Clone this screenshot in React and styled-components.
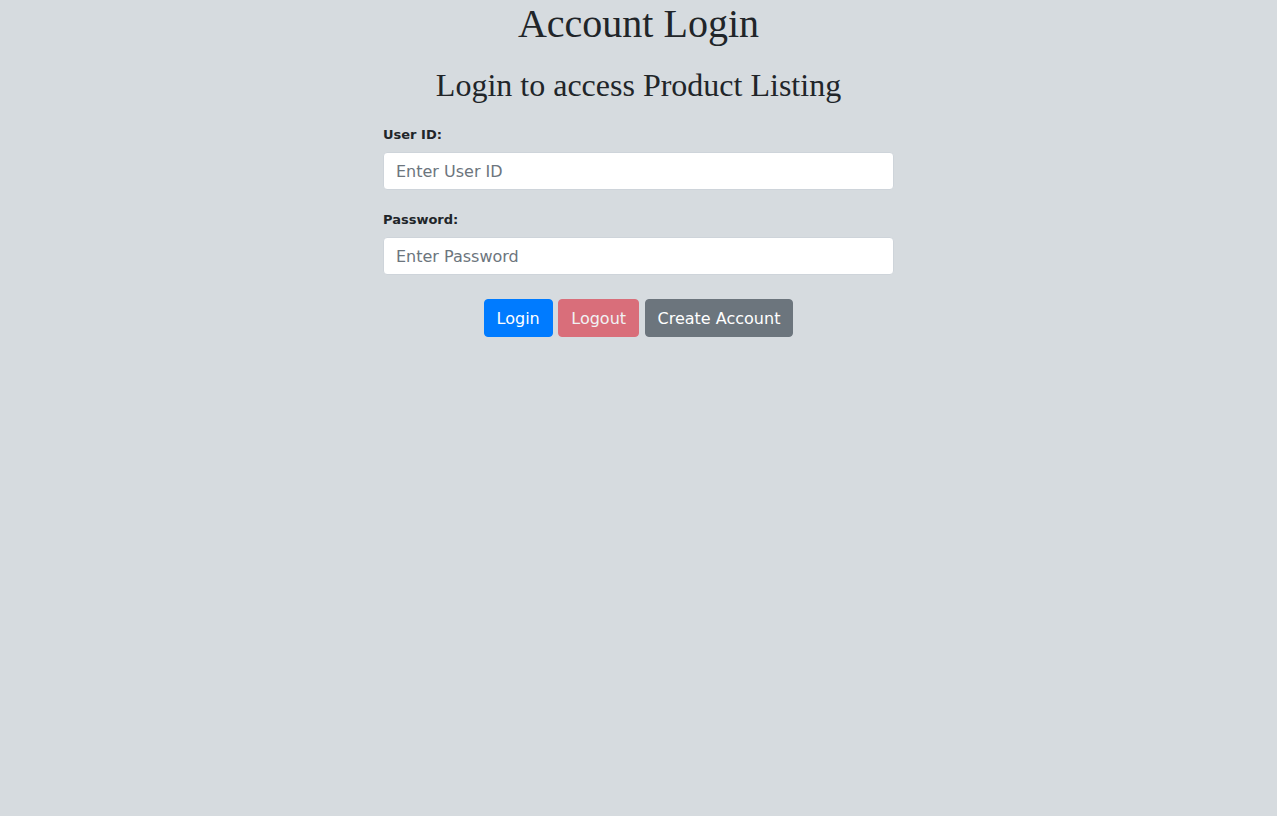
import React from "react";
import styled, { createGlobalStyle } from "styled-components";

const Global = createGlobalStyle`
  html, body { margin: 0; padding: 0; }
  body {
    background: #d6dbdf;
    color: #212529;
    font-family: "Liberation Serif", "Times New Roman", serif;
    min-height: 816px;
  }
  * { box-sizing: border-box; }
`;

const Page = styled.div`
  display: flex;
  flex-direction: column;
  align-items: center;
`;

const Title = styled.h1`
  margin: 0 0 18px;
  font-family: "Liberation Serif", serif;
  font-weight: 400;
  font-size: 40px;
  line-height: 1.2;
  text-align: center;
`;

const Subtitle = styled.h2`
  margin: 0 0 21px;
  font-family: "Liberation Serif", serif;
  font-weight: 400;
  font-size: 32px;
  line-height: 1.2;
  text-align: center;
`;

const Form = styled.form`
  width: 511px;
  display: flex;
  flex-direction: column;
`;

const Group = styled.div`
  display: flex;
  flex-direction: column;
  margin-bottom: ${(p) => p.$mb || "20.5px"};
`;

const Label = styled.label`
  font-family: "DejaVu Sans", Verdana, sans-serif;
  font-weight: 700;
  font-size: 13px;
  line-height: 1.5;
  margin-bottom: 7px;
`;

const Input = styled.input`
  height: 38px;
  width: 100%;
  padding: 7px 12px 5px;
  font-family: "DejaVu Sans", Verdana, sans-serif;
  font-size: 16px;
  line-height: 1.5;
  color: #495057;
  background: #fff;
  border: 1px solid #ced4da;
  border-radius: 4px;
  outline: none;
  &::placeholder { color: #6c757d; opacity: 1; }
`;

const Actions = styled.div`
  display: flex;
  justify-content: center;
  gap: 5.5px;
  margin-top: 4px;
`;

const colors = {
  primary: "#007bff",
  danger: "#dc3545",
  secondary: "#6c757d",
};

const Button = styled.button`
  display: inline-block;
  height: 38px;
  padding: 7px 12px 5px;
  font-family: "DejaVu Sans", Verdana, sans-serif;
  font-size: 16px;
  line-height: 1.5;
  color: #fff;
  background: ${(p) => colors[p.$variant]};
  border: 1px solid ${(p) => colors[p.$variant]};
  border-radius: 4px;
  cursor: pointer;
  &:disabled { opacity: 0.65; cursor: default; }
`;

export default function App() {
  return (
    <>
      <Global />
      <Page>
        <Title>Account Login</Title>
        <Subtitle>Login to access Product Listing</Subtitle>
        <Form onSubmit={(e) => e.preventDefault()}>
          <Group>
            <Label htmlFor="uid">User ID:</Label>
            <Input id="uid" type="text" placeholder="Enter User ID" />
          </Group>
          <Group $mb="20px">
            <Label htmlFor="pwd">Password:</Label>
            <Input id="pwd" type="password" placeholder="Enter Password" />
          </Group>
          <Actions>
            <Button $variant="primary" type="submit">Login</Button>
            <Button $variant="danger" type="button" disabled>Logout</Button>
            <Button $variant="secondary" type="button">Create Account</Button>
          </Actions>
        </Form>
      </Page>
    </>
  );
}
